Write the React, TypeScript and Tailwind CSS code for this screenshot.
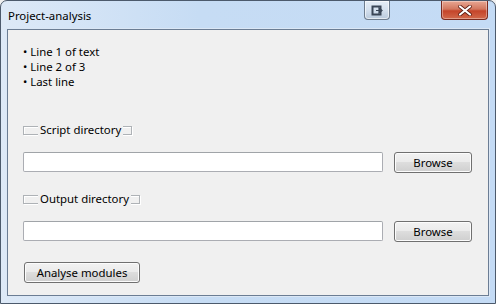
import React from 'react';

const font = { fontFamily: '"Noto Sans", "Open Sans", sans-serif' };

const Win7Button: React.FC<{ label: string; className?: string }> = ({ label, className = '' }) => (
  <button
    className={`h-[21px] rounded-[3px] border border-[#707070] bg-[linear-gradient(to_bottom,#f2f2f2_0%,#ebebeb_45%,#dddddd_50%,#cfcfcf_100%)] text-[11.4px] leading-none text-black shadow-[inset_0_0_0_1px_#fcfcfc] ${className}`}
  >
    {label}
  </button>
);

// collapsed group box: an empty etched frame with its caption laid over the top edge
const GroupLabel: React.FC<{ label: string; width: string }> = ({ label, width }) => (
  <div className={`relative ${width} h-[9px] border border-[#aeb2b6] shadow-[1px_1px_0_#fff,inset_1px_1px_0_#fff]`}>
    <span className="absolute left-[14px] top-[-5px] whitespace-nowrap bg-[#f0f0f0] px-[2px] text-[11.4px] leading-[15px] text-black">
      {label}
    </span>
  </div>
);

const InputRow: React.FC = () => (
  <div className="flex items-start">
    <div className="h-[20px] w-[360px] rounded-[2px] border border-[#abadb3] border-t-[#a0a4a8] bg-white" />
    <Win7Button label="Browse" className="ml-[11px] w-[78px]" />
  </div>
);

export default function App() {
  return (
    <div className="w-[496px] h-[304px] bg-[#f0f0f0]" style={font}>
      <div className="flex h-full w-full flex-col rounded-t-[7px] border border-[#4c5a6c] bg-[linear-gradient(to_right,#dde9f7_0%,#c6dcf4_40%,#c4dbf5_100%)]">
        {/* title bar */}
        <div className="flex h-[28px] items-start">
          <span className="ml-[7px] mt-[7px] text-[11.4px] leading-[15px] text-black">Project-analysis</span>
          <div className="ml-auto mr-[7px] flex items-start">
            <div className="flex h-[19px] w-[26px] items-center justify-center rounded-b-[4px] border border-t-0 border-[#6d7c8e] bg-[linear-gradient(to_bottom,#e4ecf6_0%,#d4e0ee_50%,#b9c9dc_100%)] shadow-[inset_0_0_0_1px_rgba(255,255,255,0.6)]">
              <svg width="13" height="11" viewBox="0 0 13 11">
                <rect x="1.5" y="1.5" width="8" height="8" fill="none" stroke="#3a4657" strokeWidth="2" />
                <path d="M5 5.5h4.5M8 3l3 2.5L8 8z" fill="#3a4657" stroke="#3a4657" strokeWidth="1.2" />
              </svg>
            </div>
            <div className="ml-[51px] flex h-[19px] w-[47px] items-center justify-center rounded-b-[4px] border border-t-0 border-[#7a2a1f] bg-[linear-gradient(to_bottom,#e8a793_0%,#d2775f_45%,#c5442a_55%,#d2694b_100%)] shadow-[inset_0_0_0_1px_rgba(255,255,255,0.35)]">
              <svg width="14" height="11" viewBox="0 0 14 11">
                <path d="M2 1.5L12 9.5M12 1.5L2 9.5" stroke="#5a1a10" strokeWidth="3.6" strokeLinecap="round" />
                <path d="M2 1.5L12 9.5M12 1.5L2 9.5" stroke="#ffffff" strokeWidth="2.2" strokeLinecap="round" />
              </svg>
            </div>
          </div>
        </div>

        {/* client */}
        <div className="mx-[6px] mb-[7px] flex-1 border border-[#6b7d94] bg-[#f0f0f0] shadow-[0_0_0_1px_#dbe7f5]">
          <div className="flex flex-col pl-[15px] pt-[14px]">
            <ul className="text-[11.4px] leading-[15px] text-black">
              <li>• Line 1 of text</li>
              <li>• Line 2 of 3</li>
              <li>• Last line</li>
            </ul>

            <div className="mt-[37px]">
              <GroupLabel label="Script directory" width="w-[109px]" />
            </div>
            <div className="mt-[17px]">
              <InputRow />
            </div>

            <div className="mt-[22px]">
              <GroupLabel label="Output directory" width="w-[117px]" />
            </div>
            <div className="mt-[17px]">
              <InputRow />
            </div>

            <div className="mt-[17px] pl-[1px]">
              <Win7Button label="Analyse modules" className="w-[116px]" />
            </div>
          </div>
        </div>
      </div>
    </div>
  );
}
